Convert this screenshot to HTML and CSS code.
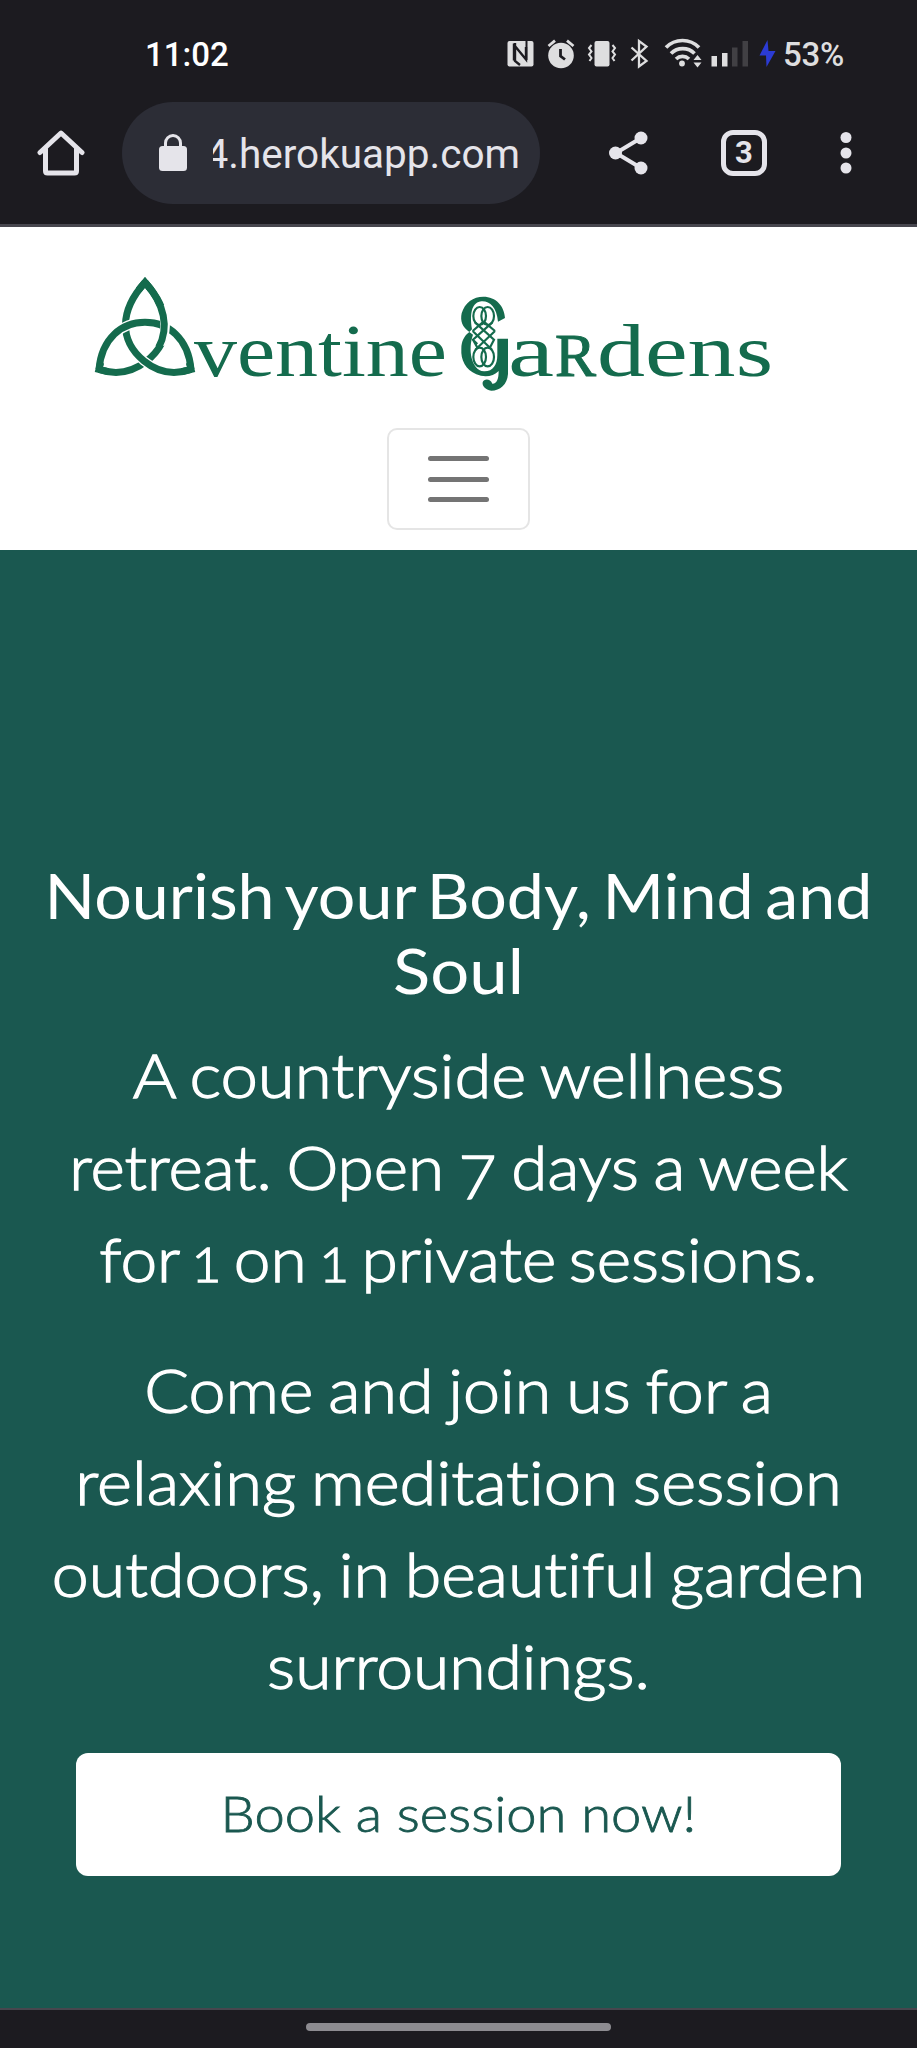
FILE: index.html
```html
<!DOCTYPE html>
<html lang="en">
<head>
<meta charset="utf-8">
<title>Aventine Gardens</title>
<link rel="stylesheet" href="styles.css">
</head>
<body>
<header class="chrome">
  <div class="status">
    <span class="clock">11:02</span>
    <svg class="status-icons" width="276" height="40" viewBox="500 35 276 40" fill="#dededf">
      <rect x="507.500" y="41" width="26" height="25.500" rx="2"/>
      <path d="M515 43v18l5 4M514.500 45.500L526 59.500V47M514 43.500v17" fill="none" stroke="#1c1b20" stroke-width="2.400"/>
      <path d="M526.500 41v19" stroke="#1c1b20" stroke-width="2"/>
      <circle cx="561" cy="55.500" r="12.800"/>
      <path d="M548.500 46l6.500-5.300M573.500 46l-6.500-5.300" stroke="#dededf" stroke-width="2.800"/>
      <path d="M560.500 49v7l4.500 3.500" fill="none" stroke="#1c1b20" stroke-width="2.800"/>
      <rect x="594.500" y="41" width="15" height="25.500" rx="2"/>
      <path d="M591.500 45l-2.500 3 2.500 3.500-2.500 3 2.500 3.500-2 3M612.500 45l2.500 3-2.500 3.500 2.500 3-2.500 3.500 2 3" fill="none" stroke="#dededf" stroke-width="2"/>
      <path d="M631.500 47.500l15 13.500-7.500 5.500V41l7.500 5.500-15 14" fill="none" stroke="#dededf" stroke-width="2.300"/>
      <g fill="none" stroke="#dededf" stroke-width="3.700">
        <path d="M666 47.500a23 23 0 0 1 33 0"/>
        <path d="M671 53.500a16.500 16.500 0 0 1 23.500 0"/>
        <path d="M676 59a9.500 9.500 0 0 1 13 0"/>
      </g>
      <circle cx="682" cy="63.500" r="2.900"/>
      <path d="M693.500 60l4-5 4 5zM693.500 62.500l4 5 4-5z"/>
      <rect x="711.500" y="56" width="5.500" height="10.500"/>
      <rect x="722" y="53" width="5.500" height="13.500"/>
      <rect x="732" y="47.500" width="5.500" height="19" fill="#414044"/>
      <rect x="742.500" y="41" width="5.500" height="25.500" fill="#414044"/>
      <path d="M767.500 40l-8 15.500h6.500l.5 11.500 9-16h-7z" fill="#2b3bd4"/>
    </svg>
    <span class="battery">53%</span>
  </div>
  <div class="toolbar">
    <svg class="home" width="48" height="48" viewBox="0 0 48 48" fill="none" stroke="#e5e4ea" stroke-width="5" stroke-linejoin="round" stroke-linecap="round">
      <path d="M3 23.500L24 4 45 23.500"/>
      <path d="M8.500 20v22q0 2 2 2h27q2 0 2-2V20"/>
    </svg>
    <div class="address">
      <svg class="lock" width="28" height="38" viewBox="0 0 28 38">
        <path d="M6.500 14V9a7.500 7.500 0 0 1 15 0v5" fill="none" stroke="#e5e4ea" stroke-width="3"/>
        <rect y="12" width="28" height="25" rx="3.500" fill="#e5e4ea"/>
      </svg>
      <div class="url"><span>4.herokuapp.com</span></div>
    </div>
    <svg class="share" width="40" height="44" viewBox="0 0 40 44" fill="#e5e4ea">
      <path d="M32 7L7 22l25 15" fill="none" stroke="#e5e4ea" stroke-width="4"/>
      <circle cx="32" cy="7" r="6.500"/><circle cx="6.500" cy="22" r="6.500"/><circle cx="32" cy="37" r="6.500"/>
    </svg>
    <div class="tabs">3</div>
    <svg class="more" width="12" height="44" viewBox="0 0 12 44" fill="#e5e4ea">
      <circle cx="6" cy="6.500" r="5.500"/><circle cx="6" cy="22" r="5.500"/><circle cx="6" cy="37" r="5.500"/>
    </svg>
  </div>
</header>

<nav class="navbar">
  <svg class="logo" width="700" height="150" viewBox="80 260 700 150" fill="#146b4d">
    <g transform="translate(80 260) scale(.33333)" fill="none" stroke-linejoin="miter">
      <path d="M195 67C270 150 280 240 200 303C155 338 105 345 57 328" stroke="#146b4d" stroke-width="21"/>
      <path d="M195 67C120 150 115 240 192 303C235 338 285 345 333 328" stroke="#fff" stroke-width="29"/>
      <path d="M195 67C120 150 115 240 192 303C235 338 285 345 333 328" stroke="#146b4d" stroke-width="21"/>
      <path d="M57 328C65 235 125 187 195 187S325 235 333 328" stroke="#fff" stroke-width="29"/>
      <path d="M57 328C65 235 125 187 195 187S325 235 333 328" stroke="#146b4d" stroke-width="21"/>
      <path d="M244 138C262 185 258 220 240 252" stroke="#fff" stroke-width="29"/>
      <path d="M195 67C254 132 268 202 236 262" stroke="#146b4d" stroke-width="21"/>
      <path d="M62 308L57 328L85 335M328 308L333 328L305 335M176 90L195 67L214 90" stroke="#146b4d" stroke-width="21"/>
    </g>
    <text class="word" x="194" y="376" textLength="253" lengthAdjust="spacingAndGlyphs">ventine</text>
    <g transform="translate(440 260) scale(.33333)">
      <path d="M195 174L174 185C170 142 150 123 125 124C98 126 88 155 96 208L88 216C67 202 60 183 65 160C74 128 100 110 130 110C168 110 193 138 195 174Z"/>
      <path d="M88 216L99 224C84 265 92 330 132 334C158 335 172 315 172 285V236H204V342C202 374 180 392 154 392C136 390 126 378 128 367C132 355 151 355 157 371C170 372 176 358 176 333C160 350 133 353 109 343C77 329 62 300 64 267C64 243 73 227 88 216Z"/>
      <g fill="none" stroke="#146b4d" stroke-width="6.500">
        <ellipse cx="119" cy="168" rx="19" ry="27"/><ellipse cx="143" cy="168" rx="19" ry="27"/>
        <ellipse cx="119" cy="291" rx="19" ry="28"/><ellipse cx="143" cy="291" rx="19" ry="28"/>
        <path d="M105 187L162 239L148 266M157 187L99 239L114 266M98 213L156 269M165 213L106 269M98 213L128 187M165 213L134 187M98 239L112 252"/>
      </g>
    </g>
    <text class="word" y="376"><tspan x="508" textLength="46" lengthAdjust="spacingAndGlyphs">a</tspan><tspan class="small-cap" x="555" textLength="41" lengthAdjust="spacingAndGlyphs">R</tspan><tspan x="597" textLength="176" lengthAdjust="spacingAndGlyphs">dens</tspan></text>
  </svg>
  <button class="menu" aria-label="Menu"><i></i><i></i><i></i></button>
</nav>

<main class="hero">
  <h1><span class="h-a">Nourish your Body, Mind and</span> <span class="h-b">Soul</span></h1>
  <p><span class="a1">A countryside wellness</span> <span class="a2">retreat. Open <b class="seven">7</b> days a week</span> <span class="a3">for <b class="one">1</b> on <b class="one">1</b> private sessions.</span></p>
  <p><span class="b1">Come and join us for a</span> <span class="b2">relaxing meditation session</span> <span class="b3">outdoors, in beautiful garden</span> <span class="b4">surroundings.</span></p>
  <a class="book"><span>Book a session now!</span></a>
</main>
<footer class="gesture"><div class="handle"></div></footer>
</body>
</html>
```
FILE: styles.css
```css
* { box-sizing: border-box; }
body {
  margin: 0;
  width: 917px;
  height: 2048px;
  display: flex;
  flex-direction: column;
  overflow: hidden;
  background: #1a5850;
}
svg { display: block; flex: none; }

.chrome {
  height: 227px;
  background: #1c1b20;
  border-bottom: 3px solid #47464e;
  font-family: Roboto, sans-serif;
  color: #e5e4ea;
}
.status {
  height: 102px;
  padding: 7px 73px 0 145px;
  display: flex;
  align-items: center;
  font-size: 33px;
  font-weight: 500;
}
.clock { color: #fff; margin-right: auto; }
.status-icons { margin-right: 7px; }
.battery { width: 61px; color: #dededf; letter-spacing: -.3px; white-space: nowrap; }

.toolbar { height: 102px; display: flex; align-items: center; padding-left: 37px; }
.address {
  width: 418px;
  height: 102px;
  margin-left: 37px;
  padding: 0 20px 0 37px;
  border-radius: 51px;
  background: #2c2d36;
  display: flex;
  align-items: center;
}
.url {
  margin-left: auto;
  width: 307px;
  padding-top: 2px;
  overflow: hidden;
  display: flex;
  justify-content: flex-end;
  font-size: 40.500px;
  white-space: nowrap;
}
.share { margin-left: 69px; }
.tabs {
  width: 46px;
  height: 46px;
  margin-left: 72px;
  border: 5px solid #e5e4ea;
  border-radius: 12px;
  font-size: 31px;
  font-weight: 700;
  line-height: 35px;
  text-align: center;
}
.more { margin-left: 73px; }

.navbar {
  height: 323px;
  padding-top: 33px;
  background: #fff;
  display: flex;
  flex-direction: column;
  align-items: center;
}
.logo { margin-right: 57px; }
.word { font-family: "Liberation Serif", serif; font-size: 75px; }
.small-cap { font-size: 61px; stroke: #146b4d; stroke-width: 1px; }
.menu {
  width: 143px;
  height: 102px;
  margin-top: 18px;
  padding: 0;
  border: 2px solid #e5e5e5;
  border-radius: 10px;
  background: #fff;
  display: flex;
  flex-direction: column;
  align-items: center;
  justify-content: center;
  gap: 15.500px;
}
.menu i { width: 61px; height: 5px; border-radius: 3px; background: #747474; }

.hero {
  height: 1458px;
  padding-top: 307.500px;
  text-align: center;
  color: #fff;
  font-family: Lato, sans-serif;
  font-weight: 300;
  font-variant-ligatures: none;
}
.hero span { display: block; white-space: nowrap; transform: scaleX(1.07); }
h1 { margin: 0 0 20px; font-size: 62px; line-height: 75px; font-weight: 400; word-spacing: -5px; }
p { margin: 0 0 39px; font-size: 61.300px; line-height: 92px; word-spacing: -3px; -webkit-text-stroke: 1.300px; }
.hero .h-b { transform: scaleX(1.11); }
.hero .a1 { transform: scaleX(1.094); }
.hero .a3 { word-spacing: -5px; transform: scaleX(1.073); }
.hero .b1 { transform: scaleX(1.083); }
.hero .b2 { transform: scaleX(1.09); }
.hero .b3 { transform: scaleX(1.081); }
.hero .b4 { transform: scaleX(1.076); }
.hero .book span { transform: scaleX(1.086); }
.seven, .one { font-weight: 300; line-height: 0; }
.seven { vertical-align: -9px; }
.one { font-size: 48px; }
.book {
  display: block;
  width: 765px;
  height: 123px;
  margin: 42px auto 0;
  border-radius: 12px;
  background: #fff;
  color: #1a5850;
  font-size: 50px;
  line-height: 121px;
  -webkit-text-stroke: .8px;
}
.gesture {
  height: 40px;
  padding-top: 13px;
  background: #1c1b20;
  border-top: 2px solid #47464e;
}
.handle { width: 305px; height: 8px; margin: 0 auto; border-radius: 4px; background: #8d8c91; }
```
